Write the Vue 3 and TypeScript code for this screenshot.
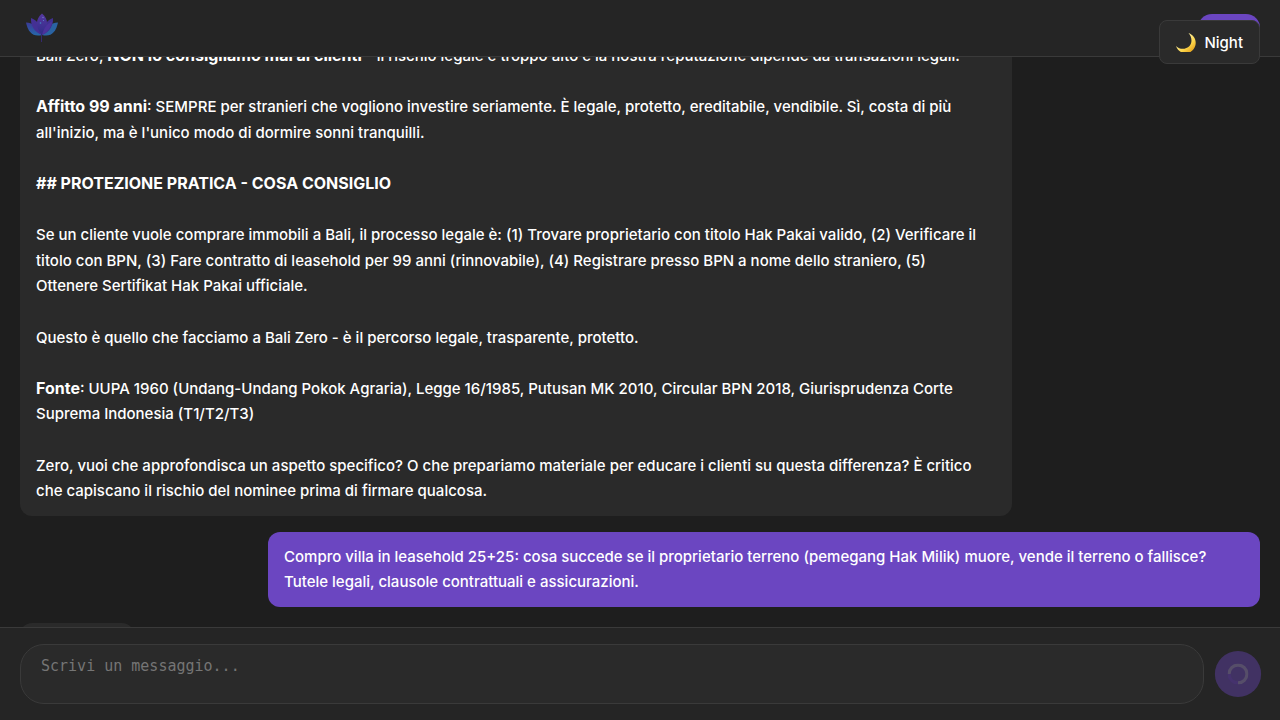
<script setup lang="ts">
import { nextTick, onMounted, ref } from 'vue'

interface Part {
  text: string
  bold?: boolean
}

const draft = ref('')
const question = ref<HTMLElement | null>(null)

const answer: Part[][] = [
  [
    { text: 'Bali Zero, ' },
    { text: 'NON lo consigliamo mai ai clienti', bold: true },
    { text: ' - il rischio legale è troppo alto e la nostra reputazione dipende da transazioni legali.' },
  ],
  [
    { text: 'Affitto 99 anni', bold: true },
    { text: ": SEMPRE per stranieri che vogliono investire seriamente. È legale, protetto, ereditabile, vendibile. Sì, costa di più all'inizio, ma è l'unico modo di dormire sonni tranquilli." },
  ],
  [{ text: '## PROTEZIONE PRATICA - COSA CONSIGLIO', bold: true }],
  [
    { text: 'Se un cliente vuole comprare immobili a Bali, il processo legale è: (1) Trovare proprietario con titolo Hak Pakai valido, (2) Verificare il titolo con BPN, (3) Fare contratto di leasehold per 99 anni (rinnovabile), (4) Registrare presso BPN a nome dello straniero, (5) Ottenere Sertifikat Hak Pakai ufficiale.' },
  ],
  [{ text: 'Questo è quello che facciamo a Bali Zero - è il percorso legale, trasparente, protetto.' }],
  [
    { text: 'Fonte', bold: true },
    { text: ': UUPA 1960 (Undang-Undang Pokok Agraria), Legge 16/1985, Putusan MK 2010, Circular BPN 2018, Giurisprudenza Corte Suprema Indonesia (T1/T2/T3)' },
  ],
  [
    { text: 'Zero, vuoi che approfondisca un aspetto specifico? O che prepariamo materiale per educare i clienti su questa differenza? È critico che capiscano il rischio del nominee prima di firmare qualcosa.' },
  ],
]

onMounted(async () => {
  await nextTick()
  question.value?.scrollIntoView({ block: 'end' })
})
</script>

<template>
  <div class="app">
    <header class="topbar">
      <svg class="logo" viewBox="0 0 36 32" aria-hidden="true">
        <defs>
          <linearGradient id="petal-blue" x1="0" y1="0" x2="0" y2="1">
            <stop offset="0" stop-color="#3a3a96" />
            <stop offset="1" stop-color="#2668aa" />
          </linearGradient>
          <linearGradient id="petal-violet" x1="0" y1="0" x2="0" y2="1">
            <stop offset="0" stop-color="#56389f" />
            <stop offset="0.600" stop-color="#3f3092" />
            <stop offset="1" stop-color="#2f2d86" />
          </linearGradient>
        </defs>
        <path d="M2 10.500C9 11 16 15 18 23C9 25.500 4 20 2 10.500Z" fill="url(#petal-blue)" />
        <path d="M34 10.500C27 11 20 15 18 23C27 25.500 32 20 34 10.500Z" fill="#2a63a2" />
        <path d="M7 6C13 8 18 14 18 23C10 20 6.500 13 7 6Z" fill="#443094" />
        <path d="M29 6C23 8 18 14 18 23C26 20 29.500 13 29 6Z" fill="#40308f" />
        <path d="M18 1.500C25 7 24.500 16 18 23C11.500 16 11 7 18 1.500Z" fill="url(#petal-violet)" />
        <path d="M18 23C20 15 24 11 28.500 9C27 15 24 20 18 23Z" fill="#4c329c" />
        <path d="M17.500 22V30" stroke="#35296f" stroke-width="1" />
        <circle cx="19" cy="5.500" r="0.700" fill="#7480c8" />
        <circle cx="16.500" cy="11" r="0.800" fill="#3f8bc0" />
        <circle cx="19.500" cy="8.500" r="0.600" fill="#5a86c8" />
      </svg>
      <button class="account" type="button" aria-label="Account"></button>
      <button class="theme" type="button">
        <svg class="moon" viewBox="0 0 20 20" aria-hidden="true">
          <defs>
            <linearGradient id="moonlight" x1="0.300" y1="0.300" x2="0.800" y2="0.900">
              <stop offset="0" stop-color="#fff0a0" />
              <stop offset="0.600" stop-color="#fbd449" />
              <stop offset="1" stop-color="#e9a820" />
            </linearGradient>
          </defs>
          <path d="M12.500 1C18 3 20.500 8 19.500 13C17 23.500 3.500 24 0 14C4 18 10 17.500 13.500 14C16.500 10.500 16 5 12.500 1Z" fill="url(#moonlight)" />
        </svg>
        <span>Night</span>
      </button>
    </header>

    <main class="messages">
      <article class="bubble reply">
        <p v-for="(parts, i) in answer" :key="i">
          <template v-for="(part, j) in parts" :key="j"><strong v-if="part.bold">{{ part.text }}</strong><template v-else>{{ part.text }}</template></template>
        </p>
      </article>
      <article ref="question" class="bubble own">
        <p>Compro villa in leasehold 25+25: cosa succede se il proprietario terreno (pemegang Hak Milik) muore, vende il terreno o fallisce? Tutele legali, clausole contrattuali e assicurazioni.</p>
      </article>
      <div class="bubble typing"></div>
    </main>

    <form class="composer" @submit.prevent>
      <textarea v-model="draft" placeholder="Scrivi un messaggio..." aria-label="Scrivi un messaggio"></textarea>
      <button class="send" type="submit" disabled aria-label="Invia">
        <svg viewBox="0 0 20 20" aria-hidden="true">
          <path d="M1.500 10A8.500 8.500 0 1 1 10 18.500" fill="none" stroke="#a08bcf" stroke-width="3" />
          <path d="M10 18.500A8.500 8.500 0 0 1 1.500 10" fill="none" stroke="#7646da" stroke-width="3" />
        </svg>
      </button>
    </form>
  </div>
</template>

<style>
body {
  margin: 0;
  background: #1e1e1e;
}
</style>

<style scoped>
.app {
  box-sizing: border-box;
  display: flex;
  flex-direction: column;
  height: 100vh;
  background: #1e1e1e;
  color: #fff;
  font-family: Inter, 'Liberation Sans', sans-serif;
  font-size: 16px;
  line-height: 1.6em;
}
.topbar {
  position: relative;
  z-index: 2;
  flex: none;
  display: flex;
  align-items: center;
  justify-content: space-between;
  height: 56px;
  padding: 0 20px 0 24px;
  background: #252525;
  border-bottom: 1px solid #3a3a3a;
}
.logo {
  width: 36px;
  height: 32px;
}
.account {
  width: 62px;
  height: 28px;
  padding: 0;
  border: 0;
  border-radius: 14px;
  background: #6b46c1;
}
.theme {
  position: absolute;
  top: 20px;
  right: 20px;
  box-sizing: border-box;
  display: flex;
  align-items: center;
  gap: 8px;
  height: 44px;
  padding: 0 16px;
  border: 1px solid #3a3a3a;
  border-radius: 8px;
  background: #2a2a2a;
  color: #fff;
  font-family: inherit;
  font-size: 15px;
  font-weight: 500;
}
.moon {
  width: 20px;
  height: 20px;
}
.messages {
  flex: 1;
  min-height: 0;
  display: flex;
  flex-direction: column;
  gap: 16px;
  padding: 20px;
  overflow-y: auto;
  scrollbar-width: none;
}
.bubble {
  flex: none;
  box-sizing: border-box;
  max-width: 80%;
  padding: 12px 16px;
  border-radius: 12px;
}
.bubble p {
  margin: 0;
  font-size: 15px;
  font-weight: 500;
}
.bubble p + p {
  margin-top: 1lh;
}
.reply {
  align-self: flex-start;
  padding-right: 24px;
  background: #2a2a2a;
}
.own {
  align-self: flex-end;
  background: #6b46c1;
  scroll-margin-bottom: 20px;
}
.typing {
  align-self: flex-start;
  width: 114px;
  height: 48px;
  background: #2a2a2a;
}
strong {
  font-size: 16px;
  font-weight: 700;
  line-height: 1;
}
.composer {
  flex: none;
  display: flex;
  align-items: center;
  gap: 12px;
  padding: 16px 20px;
  background: #252525;
  border-top: 1px solid #3a3a3a;
}
textarea {
  flex: 1;
  box-sizing: border-box;
  height: 60px;
  padding: 12px 20px;
  border: 1px solid #3a3a3a;
  border-radius: 24px;
  outline: none;
  resize: none;
  background: #2a2a2a;
  color: #fff;
  font-family: 'DejaVu Sans Mono', monospace;
  font-size: 15px;
  line-height: 18px;
}
textarea::placeholder {
  color: #757575;
}
.send {
  flex: none;
  display: grid;
  place-items: center;
  width: 44px;
  height: 44px;
  padding: 0;
  border: 0;
  border-radius: 50%;
  background: #6b46c1;
  opacity: 0.4;
  transform: scale(1.05);
}
.send svg {
  width: 20px;
  height: 20px;
}
</style>
